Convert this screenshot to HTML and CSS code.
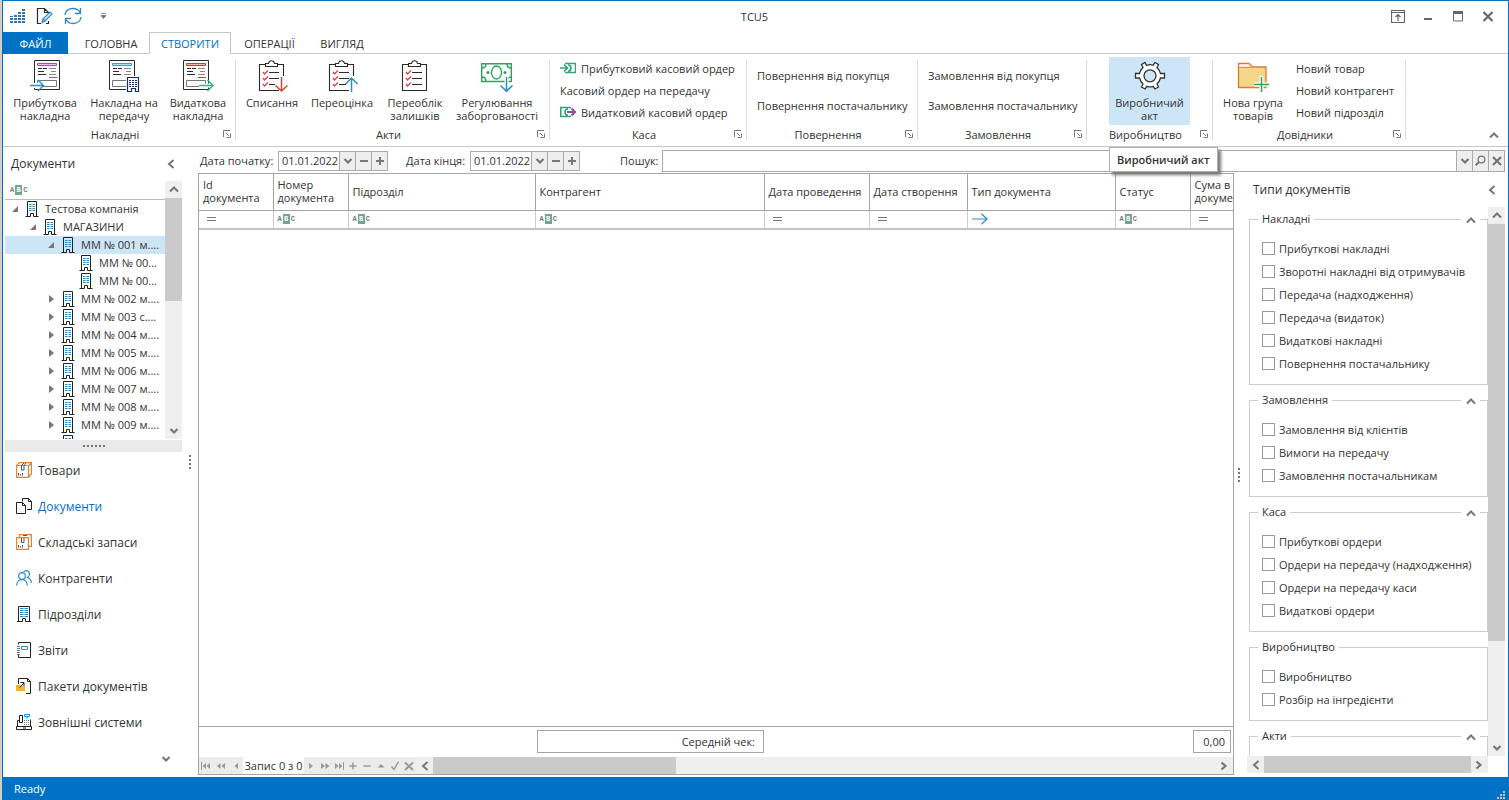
FILE: index.html
```html
<!DOCTYPE html>
<html lang="uk">
<head>
<meta charset="utf-8">
<title>TCU5</title>
<link rel="stylesheet" href="styles.css">
</head>
<body>
<svg class="defs" aria-hidden="true">
  <symbol id="up" viewBox="0 0 10 8"><path d="M1 6.500L5 2.500L9 6.500" fill="none" stroke="#777" stroke-width="2"/></symbol>
  <symbol id="down" viewBox="0 0 10 8"><path d="M1.500 2L5 5.500L8.500 2" fill="none" stroke="#777" stroke-width="2.200"/></symbol>
  <symbol id="left" viewBox="0 0 8 10"><path d="M6.500 1L2 5L6.500 9" fill="none" stroke="#777" stroke-width="2"/></symbol>
  <symbol id="right" viewBox="0 0 8 10"><path d="M1.500 1.500L5.500 5L1.500 8.500" fill="none" stroke="#777" stroke-width="2.200"/></symbol>
  <symbol id="launch" viewBox="0 0 8 8"><path d="M.5 7V.5H7M3 3L6 6M7.500 3.500V7.500H3.500" fill="none" stroke="#777"/></symbol>
  <symbol id="building" viewBox="0 0 14 16"><path d="M2.500 15V.5H11.500V15M.5 15.500H5.500V12.500H8.500V15.500H13.500" fill="none" stroke="#222"/><path d="M4 3.500H6.500M7.500 3.500H10M4 5.500H6.500M7.500 5.500H10M4 7.500H6.500M7.500 7.500H10M4 9.500H6.500M7.500 9.500H10" stroke="#1e88c8"/></symbol>
  <symbol id="clip" viewBox="0 0 32 32"><path d="M9 4.500H3.500V30.500H27.500V4.500H22M9.500 3.500V6.500H21.500V3.500H18.500Q18 .7 15.500 .7T12.500 3.500Z" fill="none" stroke="#2b2b2b" stroke-width="1.100"/><path d="M13 12.500H23M13 18.500H23M13 24.500H23" stroke="#2b2b2b"/><path d="M7 12L8.500 14L12 10.500M7 18L8.500 20L12 16.500M7 24L8.500 26L12 22.500" fill="none" stroke="#e5403f" stroke-width="1.300"/></symbol>
  <symbol id="doc" viewBox="0 0 26 31"><path d="M.5 .5H25.500V29.500H.5Z" fill="#fff" stroke="#2b2b2b"/><path d="M4 8.500H8M9 8.500H13M4 11.500H10M4 14.500H12" stroke="#2b2b2b"/><path d="M15 8.500H22M17 11.500H22M15 14.500H22" stroke="#888"/><path d="M3.500 20.500H22.500V26.500H3.500Z" fill="none" stroke="#777"/></symbol>
  <symbol id="box" viewBox="0 0 16 16"><path d="M.6 3.500H12.500V15.400H.6ZM.6 3.500L3.500 .6H15.400V12L12.500 15.400M12.500 3.500L15.400 .6" fill="none" stroke="#e8802c" stroke-width="1.200"/><path d="M5.500 3.500V8H8V3.500L10 1M5.500 3.500L8 1M2.500 11V13.500M4.500 12V13.500M6.500 11V13.500" fill="none" stroke="#555"/></symbol>
</svg>
<div class="app">
  <header class="titlebar">
    <div class="quick">
      <svg width="16" height="16" viewBox="0 0 16 16"><path d="M2.500 15V8M6.500 15V7M10.500 15V4M14.500 15V1" stroke="#3178a5" stroke-width="3" stroke-dasharray="2 1"/></svg>
      <button title="Редагувати"><svg width="17" height="18" viewBox="0 0 17 18"><path d="M5 16.500H1.500V1.500H8.500L12.500 5.500V7M8.500 1.500V5.500H12.500M12.500 14V16.500H10" fill="none" stroke="#2b2b2b" stroke-width="1.200"/><path d="M6 15.500L7 12L14 5L16 7L9 14ZM7 12L9 14" fill="#d9edf8" stroke="#2e8acb" stroke-width="1.200"/></svg></button>
      <button title="Оновити"><svg width="18" height="18" viewBox="0 0 18 18"><path d="M1 8Q2 1.500 9 1.500Q14 1.500 16.500 6M17 10Q16 16.500 9 16.500Q4 16.500 1.500 12M16.500 1V6.500H11M1.500 17V11.500H7" fill="none" stroke="#2e8acb" stroke-width="1.300"/></svg></button>
      <button class="more" title="Ще"><svg width="7" height="6" viewBox="0 0 7 6"><path d="M1 .5H6M1 2.500H6L3.500 5.500Z" stroke="#777" fill="#777" stroke-width=".8"/></svg></button>
    </div>
    <h1 class="title">TCU5</h1>
    <div class="controls">
      <button title="Стрічка"><svg width="14" height="13" viewBox="0 0 14 13"><path d="M.5 .5H13.500V12.500H.5ZM.5 2.500H13.500M7 11V5M4.500 7L7 4.500L9.500 7" fill="none" stroke="#666" stroke-width="1.200"/></svg></button>
      <button title="Згорнути"><svg width="14" height="13" viewBox="0 0 14 13"><path d="M3 9H11" stroke="#666" stroke-width="2"/></svg></button>
      <button title="Розгорнути"><svg width="14" height="13" viewBox="0 0 14 13"><path d="M2.500 1.500H11.500V11H2.500Z" fill="none" stroke="#666"/><path d="M2 2.500H12" stroke="#666" stroke-width="3"/></svg></button>
      <button title="Закрити"><svg width="14" height="13" viewBox="0 0 14 13"><path d="M2.500 2L11.500 11M11.500 2L2.500 11" stroke="#666" stroke-width="2.200"/></svg></button>
    </div>
  </header>
  <nav class="tabs">
    <button class="tab file">ФАЙЛ</button>
    <button class="tab home">ГОЛОВНА</button>
    <button class="tab active">СТВОРИТИ</button>
    <button class="tab ops">ОПЕРАЦІЇ</button>
    <button class="tab view">ВИГЛЯД</button>
  </nav>
  <section class="ribbon">
    <div class="group g-inv">
      <div class="tools">
        <button class="big w76"><svg width="32" height="32" viewBox="0 0 32 32"><use href="#doc" x="5" y="0" width="26" height="31"/><path d="M8.500 3.500H27.500V5.500H8.500Z" fill="#e8c4ea" stroke="#a24fa5"/><path d="M20 17.500H28" stroke="#a24fa5"/><path d="M1 25.500H14" stroke="#fff" stroke-width="5"/><path d="M1 25.500H14M9 20L14.500 25.500L9 31" fill="none" stroke="#2e8acb" stroke-width="1.400"/></svg><span>Прибуткова накладна</span></button>
        <button class="big w82"><svg width="32" height="32" viewBox="0 0 32 32"><use href="#doc" x="1" y="0" width="26" height="31"/><path d="M4.500 3.500H23.500V5.500H4.500Z" fill="#aee3ee" stroke="#2aa7c0"/><path d="M19 17H31V32H19Z" fill="#fff" stroke="#fff" stroke-width="2"/><path d="M19.500 17.500H30.500V31.500H27.500V28.500H23.500V31.500H19.500Z" fill="#fff" stroke="#14305c" stroke-width="1.200"/><path d="M21 20.500H29M21 22.500H29M21 24.500H29M21 26.500H29" stroke="#14305c" stroke-dasharray="2 1"/></svg><span>Накладна на передачу</span></button>
        <button class="big w66"><svg width="32" height="32" viewBox="0 0 32 32"><use href="#doc" x="1" y="0" width="26" height="31"/><path d="M4.500 3.500H23.500V5.500H4.500Z" fill="#f5b4b4" stroke="#dc3434"/><path d="M16 17.500H24" stroke="#dc3434"/><path d="M17 25.500H31" stroke="#fff" stroke-width="4"/><path d="M17 25.500H31M25.500 20L31 25.500L25.500 31" fill="none" stroke="#35b287" stroke-width="1.400"/></svg><span>Видаткова накладна</span></button>
      </div>
      <div class="caption"><span>Накладні</span><button title="Накладні"><svg width="8" height="8"><use href="#launch"/></svg></button></div>
    </div>
    <div class="group g-acts">
      <div class="tools">
        <button class="big w64"><svg width="32" height="32" viewBox="0 0 32 32"><use href="#clip" width="32" height="32"/><path d="M25.500 16V32M19 25.500H32" stroke="#fff" stroke-width="5"/><path d="M25.500 17V31M19.500 25.500L25.500 31L31.500 25.500" fill="none" stroke="#d04a30" stroke-width="1.500"/></svg><span>Списання</span></button>
        <button class="big w76"><svg width="32" height="32" viewBox="0 0 32 32"><use href="#clip" width="32" height="32"/><path d="M25.500 16V32M20 22.500H32" stroke="#fff" stroke-width="5"/><path d="M25.500 32V18M19.500 24L25.500 18L31.500 24" fill="none" stroke="#2e8acb" stroke-width="1.500"/></svg><span>Переоцінка</span></button>
        <button class="big w70"><svg width="32" height="32"><use href="#clip"/></svg><span>Переоблік залишків</span></button>
        <button class="big w94"><svg width="32" height="32" viewBox="0 0 32 32"><path d="M.7 3.700H30.300V21.500H.7ZM.7 8Q5 8 5 3.700M26 3.700Q26 8 30.300 8M.7 17Q5 17 5 21.500M26 21.500Q26 17 30.300 17" fill="none" stroke="#2aa55a" stroke-width="1.400"/><ellipse cx="15.500" cy="12.500" rx="5" ry="6.500" fill="none" stroke="#2aa55a" stroke-width="1.300"/><circle cx="7" cy="12.500" r="1.500" fill="#2aa55a"/><circle cx="24" cy="12.500" r="1.500" fill="#2aa55a"/><path d="M25.500 16V32M19 25H31" stroke="#fff" stroke-width="4"/><path d="M25.500 17V31M19.500 25.500L25.500 31.300L31.500 25.500" fill="none" stroke="#2e8acb" stroke-width="1.500"/></svg><span>Регулювання заборгованості</span></button>
      </div>
      <div class="caption"><span>Акти</span><button title="Акти"><svg width="8" height="8"><use href="#launch"/></svg></button></div>
    </div>
    <div class="group g-cash">
      <div class="tools list three">
        <button><svg width="16" height="12" viewBox="0 0 16 12"><path d="M5 1.500H15.500V10.500H5" fill="none" stroke="#36a47a" stroke-width="1.500"/><path d="M0 6H7M4 2.500L7.500 6L4 9.500M8 3Q11 3 11 6T8 9.500" fill="none" stroke="#36a47a" stroke-width="1.700"/></svg><span>Прибутковий касовий ордер</span></button>
        <button><span>Касовий ордер на передачу</span></button>
        <button><svg width="16" height="12" viewBox="0 0 16 12"><path d="M11 1.500H.7V10.500H11M8 3Q5 3 5 6T8 9.500" fill="none" stroke="#36a47a" stroke-width="1.700"/><path d="M7 6H15M11.500 2.500L15 6L11.500 9.500" fill="none" stroke="#8850a8" stroke-width="2"/></svg><span>Видатковий касовий ордер</span></button>
      </div>
      <div class="caption"><span>Каса</span><button title="Каса"><svg width="8" height="8"><use href="#launch"/></svg></button></div>
    </div>
    <div class="group g-ret">
      <div class="tools list two"><button>Повернення від покупця</button><button>Повернення постачальнику</button></div>
      <div class="caption"><span>Повернення</span><button title="Повернення"><svg width="8" height="8"><use href="#launch"/></svg></button></div>
    </div>
    <div class="group g-ord">
      <div class="tools list two"><button>Замовлення від покупця</button><button>Замовлення постачальнику</button></div>
      <div class="caption"><span>Замовлення</span><button title="Замовлення"><svg width="8" height="8"><use href="#launch"/></svg></button></div>
    </div>
    <div class="group g-prod">
      <div class="tools">
        <button class="big hot"><svg width="32" height="32" viewBox="0 0 32 32"><path d="M12.500 5.500L11 2.500L7.500 4.500L9 7.500Q6.500 10 5.500 13.500H1.500V18H5.500Q6.500 21.500 9 24L7.500 27L11 29L12.800 26.300Q16 27.500 19.200 26.300L21 29L24.500 27L23 24Q25.500 21.500 26.500 18H30.500V13.500H26.500Q25.500 10 23 7.500L24.500 4.500L21 2.500L19.200 5.200Q16 4 12.500 5.500Z" fill="#fff" stroke="#333" stroke-width="1.300"/><circle cx="16" cy="15.800" r="6" fill="#cde6f7" stroke="#333" stroke-width="1.300"/></svg><span>Виробничий акт</span></button>
        <div class="tooltip" role="tooltip">Виробничий акт</div>
      </div>
      <div class="caption"><span>Виробництво</span><button title="Виробництво"><svg width="8" height="8"><use href="#launch"/></svg></button></div>
    </div>
    <div class="group g-ref">
      <div class="tools">
        <button class="big w64"><svg width="32" height="32" viewBox="0 0 32 32"><path d="M1.500 7H29V27.500H1.500Z" fill="#f5d78c" stroke="#e07a30" stroke-width="1.300"/><path d="M1.500 7V3.500H12L15 6.500" fill="#fff" stroke="#e07a30" stroke-width="1.300"/><path d="M24.500 16V31M17 24.500H32" stroke="#fff" stroke-width="4"/><path d="M24.500 17V32M17 24.500H32" stroke="#2aa55a" stroke-width="1.500"/></svg><span>Нова група товарів</span></button>
        <div class="list three sub"><button>Новий товар</button><button>Новий контрагент</button><button>Новий підрозділ</button></div>
      </div>
      <div class="caption"><span>Довідники</span><button title="Довідники"><svg width="8" height="8"><use href="#launch"/></svg></button></div>
    </div>
    <button class="collapse" title="Згорнути стрічку"><svg width="10" height="8"><use href="#up"/></svg></button>
  </section>

  <main class="main">
    <aside class="side">
      <div class="side-head"><h2>Документи</h2><button title="Сховати"><svg width="8" height="10"><use href="#left"/></svg></button></div>
      <div class="treebox">
        <div class="tree">
          <div class="filter"><span class="abc">A<b>B</b>C</span></div>
          <ul>
            <li class="l0"><i class="open"></i><svg width="14" height="16"><use href="#building"/></svg><span>Тестова компанія</span></li>
            <li class="l1"><i class="open"></i><svg width="14" height="16"><use href="#building"/></svg><span>МАГАЗИНИ</span></li>
            <li class="l2 sel"><i class="open"></i><svg width="14" height="16"><use href="#building"/></svg><span>ММ № 001 м....</span></li>
            <li class="l3"><i></i><svg width="14" height="16"><use href="#building"/></svg><span>ММ № 00...</span></li>
            <li class="l3"><i></i><svg width="14" height="16"><use href="#building"/></svg><span>ММ № 00...</span></li>
            <li class="l2"><i class="shut"></i><svg width="14" height="16"><use href="#building"/></svg><span>ММ № 002 м....</span></li>
            <li class="l2"><i class="shut"></i><svg width="14" height="16"><use href="#building"/></svg><span>ММ № 003 с....</span></li>
            <li class="l2"><i class="shut"></i><svg width="14" height="16"><use href="#building"/></svg><span>ММ № 004 м....</span></li>
            <li class="l2"><i class="shut"></i><svg width="14" height="16"><use href="#building"/></svg><span>ММ № 005 м....</span></li>
            <li class="l2"><i class="shut"></i><svg width="14" height="16"><use href="#building"/></svg><span>ММ № 006 м....</span></li>
            <li class="l2"><i class="shut"></i><svg width="14" height="16"><use href="#building"/></svg><span>ММ № 007 м....</span></li>
            <li class="l2"><i class="shut"></i><svg width="14" height="16"><use href="#building"/></svg><span>ММ № 008 м....</span></li>
            <li class="l2"><i class="shut"></i><svg width="14" height="16"><use href="#building"/></svg><span>ММ № 009 м....</span></li>
            <li class="l2"><i></i><svg width="14" height="16"><use href="#building"/></svg></li>
          </ul>
        </div>
        <div class="vscroll"><svg width="10" height="8"><use href="#up"/></svg><div class="track"><div class="thumb tree-thumb"></div></div><svg width="10" height="8"><use href="#down"/></svg></div>
      </div>
      <div class="hsplit"><span class="dots-h"></span></div>
      <nav class="modules">
        <a href="#"><svg width="16" height="16"><use href="#box"/></svg>Товари</a>
        <a href="#" class="current"><svg width="16" height="16" viewBox="0 0 16 16"><path d="M6.500 3.500V.5H12.500L15.500 3.500V11.500H11M12.500 .5V3.500H15.500M.5 4.500H6.500L9.500 7.500V15.500H.5ZM6.500 4.500V7.500H9.500" fill="none" stroke="#222"/></svg>Документи</a>
        <a href="#"><svg width="16" height="16" viewBox="0 0 16 16"><path d="M.6 3.600H12.400V15.400H.6ZM3.500 3V.6H15.400V12.400H13" fill="none" stroke="#e8802c" stroke-width="1.200"/><path d="M5.500 4V8.500H8V4M2.500 11V13.500M4.500 12V13.500M6.500 11V13.500M7 1.500H11" fill="none" stroke="#555"/></svg>Складські запаси</a>
        <a href="#"><svg width="16" height="16" viewBox="0 0 16 16"><circle cx="6" cy="6" r="3.400" fill="none" stroke="#2e8acb" stroke-width="1.200"/><path d="M.6 15.500Q1 10 6 9.500Q11 10 11.400 15.500M7.500 2Q8.500 .6 10.500 .6Q13.500 1 13.500 4Q13.500 6.500 11.500 7.500Q15 8.500 15.400 13" fill="none" stroke="#2e8acb" stroke-width="1.200"/></svg>Контрагенти</a>
        <a href="#"><svg width="16" height="16" viewBox="0 0 16 16"><path d="M2.500 15V.5H13.500V15M1 15.500H6.500V12.500H9.500V15.500H15" fill="none" stroke="#222"/><path d="M4 2.500H12M4 4.500H12M4 6.500H12M4 8.500H12M4 10.500H12" stroke="#1e88c8" stroke-dasharray="3.500 1"/></svg>Підрозділи</a>
        <a href="#"><svg width="16" height="16" viewBox="0 0 16 16"><path d="M2.500 2.500V.5H14.500V15.500H2.500V13" fill="none" stroke="#222"/><path d="M1 4.500H4M1 6.500H4M1 8.500H4M1 10.500H4M1 12.500H4" stroke="#777"/><path d="M5.500 4.500H11.500V7.500H5.500Z" fill="none" stroke="#2e8acb"/></svg>Звіти</a>
        <a href="#"><svg width="16" height="16" viewBox="0 0 16 16"><path d="M2.500 6V.5H11.500L14.500 3.500V15.500H10M11.500 .5V3.500H14.500" fill="none" stroke="#222"/><path d="M0 7H4L5 8H9V13H0Z" fill="#fdb12c"/><path d="M3.500 9.500L8 5M4.500 4.500H8V8" fill="none" stroke="#222"/></svg>Пакети документів</a>
        <a href="#"><svg width="16" height="16" viewBox="0 0 16 16"><path d="M.5 12.500H15.500V15.500H.5ZM1.500 12V6.500H3.500M14.500 12V5.500M3.500 8.500V1.500H6.500V8.500ZM7 14H10" fill="none" stroke="#222"/><path d="M8.500 .5H13.500V2.500H8.500ZM11 3V5" fill="none" stroke="#2e8acb"/><path d="M8 6.500H13M8 8.500H13M8 10.500H13" stroke="#777" stroke-dasharray="1 1"/></svg>Зовнішні системи</a>
      </nav>
      <button class="more-mod" title="Ще"><svg width="10" height="8"><use href="#down"/></svg></button>
    </aside>
    <div class="vsplit left-split"><span class="dots-v"></span></div>
    <section class="work">
      <form class="query">
        <label for="from">Дата початку:</label>
        <div class="date"><input id="from" value="01.01.2022"><button type="button"><svg width="10" height="8"><use href="#down"/></svg></button><button type="button"><svg width="10" height="10" viewBox="0 0 10 10"><path d="M1 5H9" stroke="#777" stroke-width="2"/></svg></button><button type="button"><svg width="10" height="10" viewBox="0 0 10 10"><path d="M1 5H9M5 1V9" stroke="#777" stroke-width="2"/></svg></button></div>
        <label class="second" for="to">Дата кінця:</label>
        <div class="date"><input id="to" value="01.01.2022"><button type="button"><svg width="10" height="8"><use href="#down"/></svg></button><button type="button"><svg width="10" height="10" viewBox="0 0 10 10"><path d="M1 5H9" stroke="#777" stroke-width="2"/></svg></button><button type="button"><svg width="10" height="10" viewBox="0 0 10 10"><path d="M1 5H9M5 1V9" stroke="#777" stroke-width="2"/></svg></button></div>
        <label class="third" for="find">Пошук:</label>
        <div class="search"><input id="find"><button type="button"><svg width="10" height="8"><use href="#down"/></svg></button><button type="button"><svg width="11" height="11" viewBox="0 0 11 11"><circle cx="6.500" cy="4.500" r="3.400" fill="none" stroke="#777" stroke-width="1.200"/><path d="M4 7L.7 10.300" stroke="#777" stroke-width="2"/></svg></button><button type="button"><svg width="10" height="10" viewBox="0 0 10 10"><path d="M1 1L9 9M9 1L1 9" stroke="#777" stroke-width="2.200"/></svg></button></div>
      </form>
      <div class="columns">
        <div class="grid">
          <div class="rows">
            <table>
              <colgroup><col class="c74"><col class="c75"><col class="c187"><col class="c229"><col class="c105"><col class="c98"><col class="c148"><col class="c75"><col class="c75"></colgroup>
              <thead>
                <tr class="heads"><th>Id документа</th><th>Номер документа</th><th>Підрозділ</th><th>Контрагент</th><th>Дата проведення</th><th>Дата створення</th><th>Тип документа</th><th>Статус</th><th>Сума в документі</th></tr>
                <tr class="filters"><td><i class="eq"></i></td><td><span class="abc">A<b>B</b>C</span></td><td><span class="abc">A<b>B</b>C</span></td><td><span class="abc">A<b>B</b>C</span></td><td><i class="eq"></i></td><td><i class="eq"></i></td><td><svg width="16" height="12" viewBox="0 0 16 12"><path d="M0 6H15M9.500 .7L15 6L9.500 11.300" fill="none" stroke="#2e8acb" stroke-width="1.200"/></svg></td><td><span class="abc">A<b>B</b>C</span></td><td><i class="eq"></i></td></tr>
              </thead>
            </table>
          </div>
          <div class="totals"><output class="avg">Середній чек:</output><output class="sum">0,00</output></div>
          <div class="pager">
            <div class="nav-btns">
              <svg viewBox="0 0 14 10"><path d="M2.500 1V9" stroke="#999"/><path d="M7 2V8L3.500 5ZM11 2V8L7.500 5Z" fill="#999"/></svg>
              <svg viewBox="0 0 14 10"><path d="M6.500 2V8L3 5ZM11 2V8L7.500 5Z" fill="#999"/></svg>
              <svg viewBox="0 0 14 10"><path d="M9 2V8L5.500 5Z" fill="#999"/></svg>
            </div>
            <span class="record">Запис 0 з 0</span>
            <div class="nav-btns">
              <svg viewBox="0 0 14 10"><path d="M5 2V8L9 5Z" fill="#999"/></svg>
              <svg viewBox="0 0 14 10"><path d="M3 2V8L7 5ZM7.500 2V8L11.500 5Z" fill="#999"/></svg>
              <svg viewBox="0 0 14 10"><path d="M11.500 1V9" stroke="#999"/><path d="M3 2V8L6.500 5ZM7 2V8L10.500 5Z" fill="#999"/></svg>
              <svg viewBox="0 0 14 10"><path d="M3.500 5H10.500M7 1.500V8.500" stroke="#999" stroke-width="1.400"/></svg>
              <svg viewBox="0 0 14 10"><path d="M3.500 5H10.500" stroke="#999" stroke-width="1.400"/></svg>
              <svg viewBox="0 0 14 10"><path d="M3.500 6.500H10.500L7 3Z" fill="#999"/></svg>
              <svg viewBox="0 0 14 10"><path d="M3.500 5.500L6 8.500L10.500 .7" fill="none" stroke="#999" stroke-width="1.500"/></svg>
              <svg viewBox="0 0 14 10"><path d="M3 1.500L11 9M11 1.500L3 9" stroke="#999" stroke-width="2"/></svg>
            </div>
            <div class="hscroll"><svg width="8" height="10"><use href="#left"/></svg><div class="track"><div class="thumb grid-thumb"></div></div><svg width="8" height="10"><use href="#right"/></svg></div>
          </div>
        </div>
        <div class="vsplit right-split"><span class="dots-v"></span></div>
        <aside class="types">
          <div class="types-head"><h2>Типи документів</h2><button title="Сховати"><svg width="8" height="10"><use href="#left"/></svg></button></div>
          <div class="types-body">
            <div class="sets">
              <fieldset><legend>Накладні</legend><button title="Згорнути"><svg width="10" height="8"><use href="#up"/></svg></button>
                <label><input type="checkbox">Прибуткові накладні</label><label><input type="checkbox">Зворотні накладні від отримувачів</label><label><input type="checkbox">Передача (надходження)</label><label><input type="checkbox">Передача (видаток)</label><label><input type="checkbox">Видаткові накладні</label><label><input type="checkbox">Повернення постачальнику</label></fieldset>
              <fieldset><legend>Замовлення</legend><button title="Згорнути"><svg width="10" height="8"><use href="#up"/></svg></button>
                <label><input type="checkbox">Замовлення від клієнтів</label><label><input type="checkbox">Вимоги на передачу</label><label><input type="checkbox">Замовлення постачальникам</label></fieldset>
              <fieldset><legend>Каса</legend><button title="Згорнути"><svg width="10" height="8"><use href="#up"/></svg></button>
                <label><input type="checkbox">Прибуткові ордери</label><label><input type="checkbox">Ордери на передачу (надходження)</label><label><input type="checkbox">Ордери на передачу каси</label><label><input type="checkbox">Видаткові ордери</label></fieldset>
              <fieldset><legend>Виробництво</legend>
                <label><input type="checkbox">Виробництво</label><label><input type="checkbox">Розбір на інгредієнти</label></fieldset>
              <fieldset><legend>Акти</legend><button title="Згорнути"><svg width="10" height="8"><use href="#up"/></svg></button></fieldset>
            </div>
            <div class="vscroll"><svg width="10" height="8"><use href="#up"/></svg><div class="track"><div class="thumb types-thumb"></div></div><svg width="10" height="8"><use href="#down"/></svg></div>
          </div>
          <div class="hscroll"><svg width="8" height="10"><use href="#left"/></svg><div class="track"><div class="thumb full"></div></div><svg width="8" height="10"><use href="#right"/></svg></div>
        </aside>
      </div>
    </section>
  </main>
  <footer class="status"><span>Ready</span><svg width="9" height="9" viewBox="0 0 9 9"><path d="M6 0H8V2H6ZM3 3H5V5H3ZM6 3H8V5H6ZM0 6H2V8H0ZM3 6H5V8H3ZM6 6H8V8H6Z" fill="#c5c5c5"/></svg></footer>
</div>
</body>
</html>
```
FILE: styles.css
```css
* { box-sizing: border-box; }
body { margin: 0; padding-left: 2px; background: #cfcfcf; color: #333; font: 11px/13px "Open Sans", "Noto Sans", sans-serif; }
h1, h2, ul, form, fieldset { margin: 0; padding: 0; font-weight: normal; }
button { margin: 0; padding: 0; border: 0; background: none; color: inherit; font: inherit; display: flex; align-items: center; justify-content: center; }
input { font: inherit; color: inherit; }
svg { display: block; flex: none; }
.defs { position: absolute; width: 0; height: 0; }
.app { display: flex; flex-direction: column; height: 100vh; overflow: hidden; background: #fff; border: 1px solid #0072c6; border-bottom: 0; }

.titlebar { display: grid; grid-template-columns: 1fr auto 1fr; align-items: center; height: 31px; padding-bottom: 1px; }
.quick { display: flex; align-items: center; gap: 11px; padding-left: 6px; }
.quick .more { margin-left: 7px; }
.title { font-size: 11px; padding-right: 2px; }
.controls { display: flex; justify-content: flex-end; gap: 16px; padding-right: 13px; }

.tabs { display: flex; flex: none; height: 22px; border-bottom: 1px solid #c8c8c8; line-height: 16px; }
.tab { height: 22px; padding-top: 1px; }
.file { width: 65px; background: #0072c6; color: #fff; }
.home { width: 81px; padding-left: 5px; }
.active { width: 82px; background: #fff; border: 1px solid #c8c8c8; border-bottom: 0; color: #0072c6; }
.ops { width: 77px; }
.view { width: 68px; }

.ribbon { display: flex; flex: none; height: 93px; border-bottom: 1px solid #c8c8c8; padding-top: 3px; }
.group { position: relative; display: flex; flex-direction: column; height: 86px; }
.group::after { content: ""; position: absolute; right: 0; top: 3px; bottom: 3px; width: 1px; background: #dcdcdc; }
.g-inv { width: 233px; }
.g-acts { width: 314px; }
.g-cash { width: 197px; }
.g-ret { width: 171px; }
.g-ord { width: 169px; }
.g-prod { width: 126px; }
.g-ref { width: 193px; }
.tools { display: flex; height: 72px; padding-left: 4px; }
.big { flex-direction: column; justify-content: flex-start; gap: 4px; height: 68px; padding-top: 3px; text-align: center; }
.w64 { width: 64px; } .w66 { width: 66px; } .w70 { width: 70px; } .w76 { width: 76px; } .w82 { width: 82px; } .w94 { width: 94px; }
.list { flex-direction: column; padding-left: 10px; }
.list button { justify-content: flex-start; gap: 5px; white-space: nowrap; }
.three button { height: 22px; }
.two { padding-top: 3px; }
.two button { height: 30px; }
.sub { display: flex; padding-left: 11px; }
.g-ref .tools { padding-left: 8px; }
.g-prod .tools { position: relative; padding-left: 22px; }
.hot { width: 81px; padding: 3px 8px 0; background: #cde6f7; }
.tooltip { position: absolute; z-index: 5; left: 22px; top: 90px; padding: 5px 7px; border: 1px solid #b0b0b0; background: #fff; box-shadow: 3px 3px 3px #777; font-weight: 600; white-space: nowrap; }
.caption { display: flex; align-items: center; height: 18px; padding: 0 5px 0 4px; }
.caption span { flex: 1; text-align: center; }
.collapse { align-self: flex-end; margin: 0 9px 7px auto; }

.main { display: flex; flex: 1; min-height: 0; }
.side { display: flex; flex-direction: column; width: 179px; padding-left: 2px; }
.side-head, .types-head { display: flex; align-items: center; justify-content: space-between; height: 34px; padding: 0 7px 0 6px; }
h2 { font-size: 12px; line-height: 16px; }
.treebox { display: flex; height: 258px; }
.tree { flex: 1; overflow: hidden; }
.filter { height: 19px; padding: 4px 0 0 5px; border-bottom: 1px solid #bbb; }
ul { list-style: none; }
li { display: flex; align-items: center; height: 18px; gap: 6px; white-space: nowrap; line-height: 18px; }
li i { display: flex; justify-content: center; width: 8px; }
.l0 { padding-left: 6px; } .l1 { padding-left: 24px; } .l2 { padding-left: 42px; } .l3 { padding-left: 60px; }
.sel { background: #cde6f7; }
.open::before { content: ""; border-left: 6px solid transparent; border-bottom: 6px solid #777; }
.shut::before { content: ""; border: 4px solid transparent; border-left: 5px solid #777; border-right: 0; }
.vscroll { display: flex; flex-direction: column; align-items: center; width: 17px; background: #efefef; padding: 4px 0; gap: 5px; }
.hscroll { display: flex; align-items: center; height: 17px; background: #efefef; padding: 0 5px; gap: 4px; }
.track { flex: 1; }
.vscroll .track { width: 17px; }
.thumb { background: #cacaca; width: 100%; }
.hscroll .thumb { height: 17px; }
.tree-thumb { height: 46%; }
.types-thumb { height: 81%; }
.hscroll .grid-thumb { width: 31%; }
.hsplit { display: flex; align-items: center; justify-content: center; height: 12px; margin-top: 1px; background: #eaeaea; }
.dots-h { width: 22px; height: 2px; background: repeating-linear-gradient(90deg, #777 0 2px, transparent 2px 4px); }
.dots-v { width: 2px; height: 14px; background: repeating-linear-gradient(#777 0 2px, transparent 2px 4px); }
.modules a { display: flex; align-items: center; gap: 6px; height: 36px; padding-left: 11px; color: #333; text-decoration: none; font-size: 12px; }
.modules .current { color: #0a6ccc; }
.more-mod { align-self: flex-end; margin: 15px 11px 0 0; }
.vsplit { display: flex; align-items: center; justify-content: center; width: 16px; }
.right-split { width: 13px; padding-right: 3px; }
.work { display: flex; flex: 1; flex-direction: column; min-width: 0; }
.query { display: flex; align-items: center; height: 26px; padding: 1px 3px 0 0; }
.query label { width: 80px; padding-left: 2px; white-space: nowrap; }
.query .second { width: 82px; padding-left: 18px; }
.query .third { width: 82px; padding-left: 40px; }
.date, .search { display: flex; height: 20px; border: 1px solid #aaa; }
.date { width: 110px; }
.search { flex: 1; height: 22px; }
.date input, .search input { flex: 1; min-width: 0; padding: 0 0 0 3px; border: 0; background: #fff; }
.date button, .search button { width: 16px; border-left: 1px solid #aaa; background: #eee; }
.columns { display: flex; flex: 1; min-height: 0; }
.grid { display: flex; flex: 1; flex-direction: column; min-width: 0; margin-bottom: 2px; border: 1px solid #a5a5a5; }
.rows { flex: 1; overflow: hidden; }
table { width: 1066px; table-layout: fixed; border-collapse: collapse; }
.c74 { width: 74px; } .c75 { width: 75px; } .c98 { width: 98px; } .c105 { width: 105px; } .c148 { width: 148px; } .c187 { width: 187px; } .c229 { width: 229px; }
th, td { padding: 0 4px; border-right: 1px solid #a5a5a5; text-align: left; font-weight: normal; overflow: hidden; }
.heads th { height: 36px; padding-bottom: 1px; border-bottom: 1px solid #a5a5a5; }
.filters td { height: 19px; border-right-color: #ccc; border-bottom: 2px solid #c4c4c4; }
.eq { display: block; width: 9px; height: 4px; margin-left: 4px; border: solid #777; border-width: 1px 0; }
.abc { display: flex; align-items: center; gap: 1px; height: 10px; font: bold 7px/10px "Liberation Mono", monospace; color: #777; }
.abc b { width: 7px; background: #72a594; color: #fff; text-align: center; }
.totals { display: flex; justify-content: space-between; height: 31px; padding: 3px 2px 4px 338px; border-top: 1px solid #a5a5a5; }
.totals output { border: 1px solid #a5a5a5; line-height: 22px; text-align: right; }
.avg { width: 227px; padding-right: 8px; }
.sum { width: 38px; padding-right: 5px; }
.pager { display: flex; height: 17px; background: #ececec; }
.pager .hscroll { flex: 1; background: #efefef; }
.nav-btns { display: flex; align-items: center; }
.nav-btns svg { width: 14px; height: 10px; }
.record { width: 61px; background: #fff; line-height: 17px; text-align: center; white-space: nowrap; }
.nav-btns:first-child { width: 44px; gap: 1px; }
.types { display: flex; flex-direction: column; width: 261px; padding: 0 3px 4px 0; }
.types-head { padding: 0 9px 0 6px; }
.types-body { display: flex; flex: 1; min-height: 0; }
.sets { flex: 1; overflow: hidden; padding: 4px 0 0 2px; }
.types > .hscroll { margin-right: 17px; }
fieldset { position: relative; min-width: 0; min-height: 60px; padding: 10px 0 9px 12px; margin-bottom: 7px; border: 1px solid #ccc; }
legend { margin-left: -4px; padding: 0 4px; line-height: 16px; }
fieldset label { display: flex; align-items: center; gap: 4px; height: 23px; white-space: nowrap; }
fieldset input { appearance: none; width: 13px; height: 13px; margin: 0; border: 1px solid #999; background: #fff; }
fieldset button { position: absolute; right: 7px; top: -12px; width: 19px; height: 10px; background: #fff; }
.status { display: flex; align-items: center; justify-content: space-between; height: 23px; padding: 0 2px 0 11px; background: #0072c6; color: #fff; }
.status svg { align-self: flex-end; }
```
